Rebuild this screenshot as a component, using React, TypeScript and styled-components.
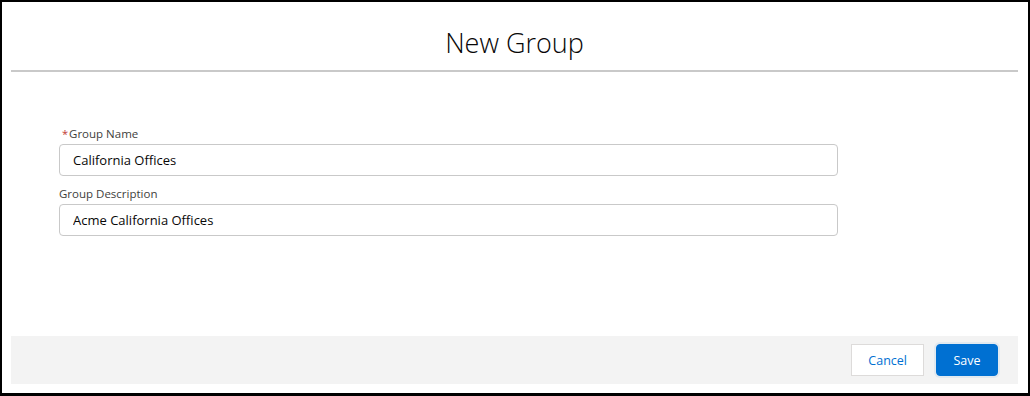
import React from "react";
import styled, { createGlobalStyle } from "styled-components";

const Global = createGlobalStyle`
  html, body { margin: 0; padding: 0; background: #ffffff; }
  body { font-family: "Open Sans", "Noto Sans", Arial, sans-serif; }
  * { box-sizing: border-box; }
`;

const Modal = styled.div`
  width: 1030px;
  height: 396px;
  border: 2px solid #000000;
  border-bottom-width: 3px;
  display: flex;
  flex-direction: column;
  padding: 0 10px 9px 9px;
  background: #ffffff;
`;

const Header = styled.header`
  height: 70px;
  border-bottom: 2px solid #c9c9c9;
  display: flex;
  align-items: center;
  justify-content: center;
  padding-top: 12px;
`;

const Title = styled.h1`
  margin: 0;
  font-family: "Open Sans", "Noto Sans", Arial, sans-serif;
  font-weight: 300;
  font-size: 27px;
  color: #080707;
`;

const Body = styled.div`
  flex: 1;
  padding: 54px 0 0 48px;
  display: flex;
  flex-direction: column;
  gap: 10px;
`;

const Field = styled.div`
  display: flex;
  flex-direction: column;
  width: 779px;
`;

const Label = styled.label`
  height: 18px;
  font-size: 11.5px;
  line-height: 16px;
  color: #3e3e3c;
  display: flex;
  align-items: flex-start;
`;

const Required = styled.abbr`
  color: #c23934;
  text-decoration: none;
  font-size: 11px;
  margin: 0 1px 0 3px;
`;

const Input = styled.input`
  height: 32px;
  width: 100%;
  border: 1px solid #c9c9c9;
  border-radius: 4px;
  padding: 0 13px;
  font-family: "Open Sans", "Noto Sans", Arial, sans-serif;
  font-size: 13px;
  color: #080707;
  background: #ffffff;
  outline: none;
`;

const Footer = styled.footer`
  height: 48px;
  background: #f3f3f3;
  display: flex;
  justify-content: flex-end;
  align-items: center;
  gap: 12px;
  padding: 0 20px 0 0;
`;

const Button = styled.button<{ $brand?: boolean }>`
  height: 32px;
  padding: 0 16px;
  min-width: ${(p) => (p.$brand ? "62px" : "72px")};
  border-radius: ${(p) => (p.$brand ? "4px" : "0")};
  border: 1px solid ${(p) => (p.$brand ? "#0070d2" : "#dddbda")};
  background: ${(p) => (p.$brand ? "#0070d2" : "#ffffff")};
  color: ${(p) => (p.$brand ? "#ffffff" : "#0070d2")};
  font-family: "Open Sans", "Noto Sans", Arial, sans-serif;
  font-size: 12.5px;
  box-shadow: ${(p) => (p.$brand ? "0 0 0 2px rgba(0,112,210,0.07)" : "none")};
  cursor: pointer;
`;

export default function App() {
  return (
    <>
      <Global />
      <Modal>
        <Header>
          <Title>New Group</Title>
        </Header>
        <Body>
          <Field>
            <Label>
              <Required title="required">*</Required>Group Name
            </Label>
            <Input defaultValue="California Offices" />
          </Field>
          <Field>
            <Label>Group Description</Label>
            <Input defaultValue="Acme California Offices" />
          </Field>
        </Body>
        <Footer>
          <Button>Cancel</Button>
          <Button $brand>Save</Button>
        </Footer>
      </Modal>
    </>
  );
}
